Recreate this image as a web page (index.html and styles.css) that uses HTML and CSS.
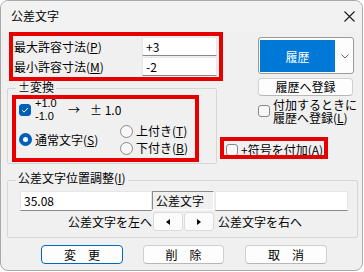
FILE: index.html
```html
<!DOCTYPE html>
<html lang="ja">
<head>
<meta charset="utf-8">
<title>公差文字</title>
<link rel="stylesheet" href="styles.css">
</head>
<body>
<div class="win">
  <div class="titlebar">
    <span class="title">公差文字</span>
    <svg class="close" width="11" height="11" viewBox="0 0 11 11"><path d="M0.5 0.5 L10.5 10.5 M10.5 0.5 L0.5 10.5" stroke="#1a1a1a" stroke-width="1.1" fill="none"/></svg>
  </div>
  <div class="content">
    <div class="top">
      <div class="left">
        <div class="fields">
          <div class="field"><span class="flabel">最大許容寸法(<u>P</u>)</span><span class="input">+3</span></div>
          <div class="field"><span class="flabel">最小許容寸法(<u>M</u>)</span><span class="input">-2</span></div>
        </div>
        <div class="grp pm">
          <span class="grp-label">±変換</span>
          <div class="pmrow">
            <span class="cb checked"><svg width="12" height="12" viewBox="0 0 12 12"><path d="M3.2 6.3 L5.1 8.1 L8.9 4" stroke="#fff" stroke-width="1" fill="none"/></svg></span>
            <span class="nums"><span>+1.0</span><span>-1.0</span></span>
            <span class="arrow">→</span>
            <span>± 1.0</span>
          </div>
          <div class="radios">
            <div class="ropt main"><span class="rb on"></span><span>通常文字(<u>S</u>)</span></div>
            <div class="rcol">
              <div class="ropt"><span class="rb"></span><span>上付き(<u>T</u>)</span></div>
              <div class="ropt"><span class="rb"></span><span>下付き(<u>B</u>)</span></div>
            </div>
          </div>
        </div>
      </div>
      <div class="right">
        <div class="combo">
          <span class="sel">履歴</span>
          <svg class="chev" width="8" height="5" viewBox="0 0 8 5"><path d="M0.5 0.5 L4 4 L7.5 0.5" stroke="#666" stroke-width="1" fill="none"/></svg>
        </div>
        <div class="btn reg">履歴へ登録</div>
        <div class="chkL"><span class="cb"></span><span class="two"><span class="ln">付加するときに</span><span class="ln">履歴へ登録(<u>L</u>)</span></span></div>
        <div class="chkA"><span class="cb"></span><span>+符号を付加(<u>A</u>)</span></div>
      </div>
    </div>
    <div class="grp pos">
      <span class="grp-label">公差文字位置調整(<u>I</u>)</span>
      <div class="posrow1">
        <span class="input wide">35.08</span>
        <span class="sunk">公差文字</span>
        <span class="input wide2"></span>
      </div>
      <div class="posrow2">
        <span class="ltext">公差文字を左へ</span>
        <span class="sbtn"><svg width="4" height="6" viewBox="0 0 4 6"><path d="M4 0 L0 3 L4 6 Z" fill="#000"/></svg></span>
        <span class="sbtn"><svg width="4" height="6" viewBox="0 0 4 6"><path d="M0 0 L4 3 L0 6 Z" fill="#000"/></svg></span>
        <span class="rtext">公差文字を右へ</span>
      </div>
    </div>
    <div class="buttons">
      <div class="btn big def">変　更</div>
      <div class="btn big b2">削　除</div>
      <div class="btn big b3">取　消</div>
    </div>
  </div>
  <div class="mark m1"></div>
  <div class="mark m2"></div>
  <div class="mark m3"></div>
</div>
</body>
</html>
```
FILE: styles.css
```css
html, body {
  margin: 0;
  padding: 0;
  background: #ffffff;
}
body {
  font-family: "Noto Sans CJK JP", "Noto Sans", sans-serif;
  font-size: 12px;
  color: #000;
}
u { text-decoration: underline; text-underline-offset: 1px; }
.win {
  position: relative;
  width: 363px;
  height: 271px;
  box-sizing: border-box;
  border: 1px solid #a9a9a9;
  border-radius: 8px;
  background: #f0f0f0;
  overflow: hidden;
}
.titlebar {
  height: 30px;
  display: flex;
  align-items: center;
  padding-left: 10px;
  background: #f2f2f2;
}
.title { line-height: 14px; }
.close { margin-left: auto; margin-right: 7px; }
.content { padding: 0 4px 0 6px; }
.top { display: flex; height: 134px; }
.left { width: 210px; }
.fields { margin-top: 6px; display: flex; flex-direction: column; gap: 1px; }
.field { display: flex; align-items: center; height: 19px; padding-left: 7px; }
.flabel { flex: 1; line-height: 14px; }
.input {
  display: block;
  box-sizing: border-box;
  height: 19px;
  width: 75px;
  background: #fff;
  border: 1px solid #e6e6e6;
  border-bottom-color: #8a8a8a;
  padding-left: 3px;
  line-height: 17px;
}
.grp { border: 1px solid #d6d6d6; border-radius: 2px; box-sizing: border-box; }
.grp-label {
  display: table;
  line-height: 14px;
  padding: 0 2px;
  background: #f0f0f0;
}
.pm { margin-top: 12px; height: 76px; padding-left: 11px; }
.pm .grp-label { margin: -9px 0 0 -3px; }
.pmrow { margin-top: 2px; height: 27px; display: flex; align-items: center; }
.cb {
  width: 12px;
  height: 12px;
  box-sizing: border-box;
  border: 1px solid #8a8a8a;
  border-radius: 3px;
  background: #f7f7f7;
  flex: none;
  display: block;
}
.cb svg { display: block; margin: -1px; }
.cb.checked { background: #005fb8; border-color: #005fb8; }
.nums {
  display: flex;
  flex-direction: column;
  margin-left: 4px;
  width: 33px;
  font-family: "Liberation Sans", sans-serif;
  font-size: 11px;
  line-height: 13px;
}
.arrow { width: 22px; }
.radios { display: flex; align-items: center; height: 33px; }
.ropt { display: flex; align-items: center; gap: 3px; height: 16px; line-height: 14px; }
.ropt.main { width: 101px; }
.rcol { display: flex; flex-direction: column; gap: 1px; }
.rb {
  width: 13px;
  height: 13px;
  box-sizing: border-box;
  border-radius: 50%;
  border: 1px solid #8a8a8a;
  background: #f7f7f7;
  flex: none;
}
.rb.on { border: 4px solid #005fb8; background: #fff; }
.right { flex: 1; }
.combo {
  margin: 6px 0 0 41px;
  width: 96px;
  height: 37px;
  box-sizing: border-box;
  border: 1px solid #9a9a9a;
  border-radius: 3px;
  padding: 2px 1px 1px 1px;
  display: flex;
  align-items: stretch;
  background: #fdfdfd;
}
.sel {
  width: 75px;
  background: #0078d7;
  color: #fff;
  display: flex;
  align-items: center;
  justify-content: center;
}
.chev { align-self: center; margin-left: 6px; }
.btn {
  box-sizing: border-box;
  border: 1px solid #d0d0d0;
  border-bottom-color: #b8b8b8;
  border-radius: 4px;
  background: #fdfdfd;
  display: flex;
  align-items: center;
  justify-content: center;
  line-height: 14px;
}
.reg { margin: 4px 0 0 41px; width: 95px; height: 18px; }
.chkL { margin: 2px 0 0 41px; display: flex; align-items: center; gap: 3px; }
.two { display: flex; flex-direction: column; line-height: 13px; }
.chkA { margin: 18px 0 0 9px; display: flex; align-items: center; gap: 3px; height: 15px; line-height: 14px; }
.pos { margin-top: 15px; height: 58px; padding-left: 12px; }
.pos .grp-label { margin: -10px 0 0 -4px; }
.posrow1 { margin-top: 6px; display: flex; align-items: flex-start; height: 20px; }
.input.wide { width: 132px; height: 20px; line-height: 18px; }
.input.wide2 { width: 133px; height: 20px; margin-left: 1px; }
.sunk {
  width: 62px;
  height: 19px;
  box-sizing: border-box;
  border: 1px solid;
  border-color: #8c8c8c #ffffff #ffffff #8c8c8c;
  padding-left: 3px;
  line-height: 17px;
}
.posrow2 { margin-top: 1px; display: flex; align-items: center; height: 19px; }
.ltext { width: 132px; text-align: right; line-height: 14px; }
.sbtn {
  width: 30px;
  height: 19px;
  box-sizing: border-box;
  margin-left: 1px;
  border: 1px solid #dadada;
  border-radius: 3px;
  background: #fbfbfb;
  display: flex;
  align-items: center;
  justify-content: center;
}
.rtext { margin-left: 4px; line-height: 14px; }
.buttons { margin-top: 7px; padding-left: 34px; display: flex; }
.big { width: 82px; height: 19px; }
.def { border: 1px solid #0067c0; }
.b2 { width: 81px; margin-left: 20px; }
.b3 { margin-left: 21px; }
.mark { position: absolute; border: 4px solid #e60000; box-sizing: border-box; }
.m1 { left: 8px; top: 31px; width: 214px; height: 49px; }
.m2 { left: 11px; top: 94px; width: 187px; height: 67px; }
.m3 { left: 219px; top: 136px; width: 108px; height: 22px; }
```
